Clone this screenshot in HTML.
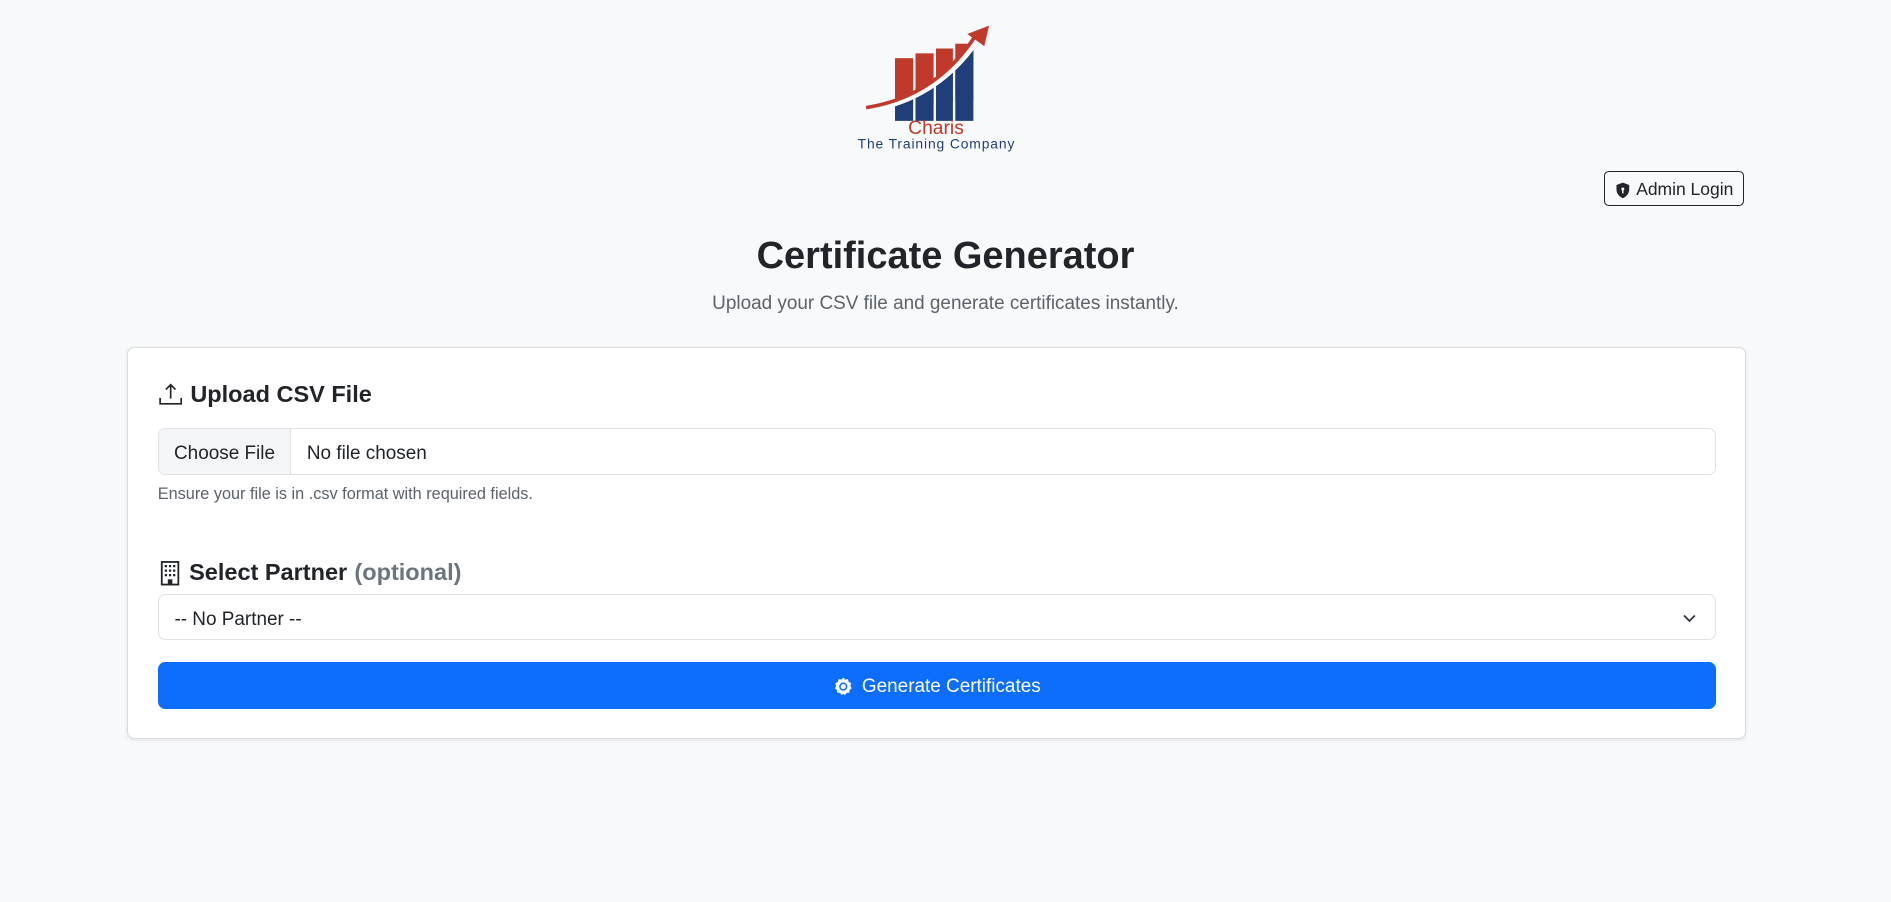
<!DOCTYPE html>
<html><head><meta charset="utf-8"><style>
html,body{margin:0;padding:0;background:#f8f9fa;}
body{width:1568px;height:748px;zoom:1.206;font-family:"Liberation Sans",sans-serif;color:#212529;position:relative;overflow:hidden;}
.abs{position:absolute;}
.btn-admin{left:1330px;top:142px;width:116px;height:29px;border:1px solid #212529;border-radius:4px;font-size:14.5px;display:flex;align-items:center;justify-content:center;gap:5px;padding-top:2px;box-sizing:border-box;}
h1{position:absolute;left:0;width:1568px;top:195px;margin:0;text-align:center;font-size:31.5px;font-weight:bold;}
.sub{left:0;width:1568px;top:243px;text-align:center;font-size:15.7px;color:#5c636a;}
.card{left:105px;top:288px;width:1341px;height:323px;background:#fff;border:1px solid #d9dcdf;border-radius:6px;box-shadow:0 1px 3px rgba(0,0,0,.08);}
.h{font-size:19.5px;font-weight:bold;display:flex;align-items:center;gap:6px;}
.file{left:25px;top:66px;width:1290px;height:37px;border:1px solid #dee2e6;border-radius:6px;display:flex;font-size:15.7px;overflow:hidden;}
.file .b{width:109px;background:#f4f5f7;border-right:1px solid #dee2e6;display:flex;align-items:center;justify-content:center;padding-top:5px;}
.file .t{padding-left:13px;display:flex;align-items:center;padding-top:5px;}
.help{left:25px;top:113px;font-size:13.5px;color:#5c636a;}
.sel{left:25px;top:204px;width:1292px;height:38px;border:1px solid #dee2e6;border-radius:6px;font-size:15.7px;display:flex;align-items:center;padding-left:13px;padding-top:5px;box-sizing:border-box;}
.go{left:25px;top:260px;width:1292px;height:39px;background:#0d6efd;border-radius:6px;color:#fff;font-size:15.7px;display:flex;align-items:center;justify-content:center;gap:7px;padding-top:3px;box-sizing:border-box;}
</style></head><body>
<svg class="abs" style="left:708px;top:18px" width="140" height="112" viewBox="0 0 140 112">
<defs>
<clipPath id="above"><path d="M0 0 H140 V60 L10 73 Q70 64 104 12 L140 0Z"/><path d="M0 0 L0 73 L10 73 Q70 64 104 12 L140 0Z"/></clipPath>
<clipPath id="below"><path d="M10 73 Q70 64 104 12 L140 0 V112 H0 V73Z"/></clipPath>
</defs>
<g clip-path="url(#above)" fill="#c0392b">
<rect x="34" y="30" width="15" height="60"/><rect x="51" y="26" width="15" height="60"/><rect x="68" y="22" width="14" height="60"/><rect x="84" y="18" width="15" height="60"/>
</g>
<g clip-path="url(#below)" fill="#1f3f7a">
<rect x="34" y="30" width="15" height="52"/><rect x="51" y="26" width="15" height="56"/><rect x="68" y="22" width="14" height="60"/><rect x="84" y="18" width="15" height="64"/>
</g>
<path d="M10 73 Q70 64 104 12" fill="none" stroke="#fff" stroke-width="5"/>
<path d="M10 71 Q68 62 101 11" fill="none" stroke="#c0392b" stroke-width="3"/>
<path d="M94 10 L112 3 L108 20Z" fill="#c0392b"/>
<text x="68" y="93" text-anchor="middle" font-family="Liberation Sans" font-size="16" fill="#c0392b">Charis</text>
<text x="68" y="105" text-anchor="middle" font-family="Liberation Sans" font-size="11.5" textLength="130" fill="#1f3f7a">The Training Company</text>
</svg>
<div class="abs btn-admin"><svg width="13" height="14" viewBox="0 0 16 16"><path d="M8 0 L14.5 2.5 V7 C14.5 11.5 11 14.5 8 16 C5 14.5 1.5 11.5 1.5 7 V2.5Z" fill="#212529"/><circle cx="8" cy="6.5" r="1.5" fill="#fff"/><rect x="7.3" y="7.5" width="1.4" height="3.5" fill="#fff"/></svg>Admin Login</div>
<h1>Certificate Generator</h1>
<div class="abs sub">Upload your CSV file and generate certificates instantly.</div>
<div class="abs card">
 <div class="abs h" style="left:25px;top:27px"><svg width="21" height="20" viewBox="0 0 16 16" fill="none" stroke="#212529" stroke-width="1.1"><path d="M1 10.5 V14.5 H15 V10.5"/><path d="M8 11 V2 M4.8 5 L8 1.8 L11.2 5"/></svg>Upload CSV File</div>
 <div class="abs file"><div class="b">Choose File</div><div class="t">No file chosen</div></div>
 <div class="abs help">Ensure your file is in .csv format with required fields.</div>
 <div class="abs h" style="left:25px;top:175px"><svg width="20" height="22" viewBox="0 0 16 16"><rect x="2.5" y="0.5" width="11" height="15" fill="none" stroke="#212529" stroke-width="1.2"/><g fill="#212529"><rect x="4.5" y="2.5" width="1.5" height="1.5"/><rect x="7.25" y="2.5" width="1.5" height="1.5"/><rect x="10" y="2.5" width="1.5" height="1.5"/><rect x="4.5" y="5.5" width="1.5" height="1.5"/><rect x="7.25" y="5.5" width="1.5" height="1.5"/><rect x="10" y="5.5" width="1.5" height="1.5"/><rect x="4.5" y="8.5" width="1.5" height="1.5"/><rect x="7.25" y="8.5" width="1.5" height="1.5"/><rect x="10" y="8.5" width="1.5" height="1.5"/><rect x="6.5" y="12" width="3" height="3.5"/></g></svg>Select Partner <span style="color:#6c757d">(optional)</span></div>
 <div class="abs sel">-- No Partner --<svg class="abs" style="right:14px;top:13px" width="14" height="12" viewBox="0 0 16 16"><path d="M2 5 L8 11 L14 5" fill="none" stroke="#343a40" stroke-width="2"/></svg></div>
 <div class="abs go"><svg width="17" height="17" viewBox="0 0 16 16"><path d="M8 0.5 L9.5 2 L11.7 1.7 L12.2 3.8 L14.2 4.8 L13.5 6.9 L14.6 8.8 L12.9 10.1 L12.8 12.3 L10.6 12.4 L9.2 14.1 L8 13 L6.8 14.1 L5.4 12.4 L3.2 12.3 L3.1 10.1 L1.4 8.8 L2.5 6.9 L1.8 4.8 L3.8 3.8 L4.3 1.7 L6.5 2Z" fill="#fff"/><circle cx="8" cy="7.5" r="2.6" fill="none" stroke="#0d6efd" stroke-width="1.2"/></svg>Generate Certificates</div>
</div>
</body></html>
